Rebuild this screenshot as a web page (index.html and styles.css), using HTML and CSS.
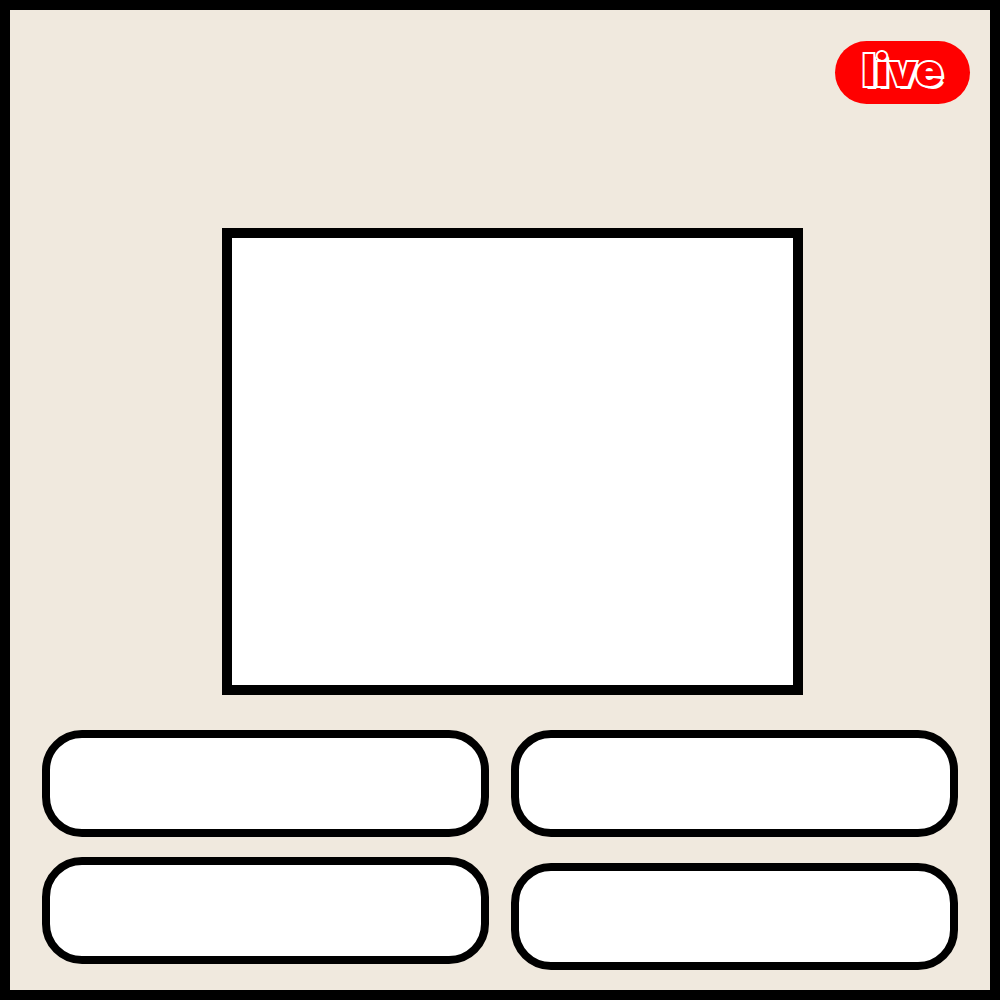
FILE: index.html
```html
<!DOCTYPE html>
<html lang="en">
<head>
<meta charset="utf-8">
<meta name="viewport" content="width=device-width, initial-scale=1">
<title>Live</title>
<link rel="stylesheet" href="styles.css">
</head>
<body>
<main class="frame">
  <header class="topbar"><span class="live">live</span></header>
  <section class="stage"><div class="screen"></div></section>
  <section class="panels">
    <div class="column">
      <div class="panel"></div>
      <div class="panel"></div>
    </div>
    <div class="column column-wide">
      <div class="panel"></div>
      <div class="panel"></div>
    </div>
  </section>
</main>
</body>
</html>
```
FILE: styles.css
```css
* {
  box-sizing: border-box;
}

body {
  margin: 0;
}

.frame {
  min-height: 100vh;
  border: 10px solid #000;
  background: #f0e9de;
  font-family: Inter, "Liberation Sans", sans-serif;
}

.topbar {
  display: flex;
  justify-content: flex-end;
  padding: 31px 20px 0;
}

.live {
  width: 135px;
  height: 63px;
  border-radius: 32px;
  background: #f00;
  color: #f00;
  font-size: 44px;
  font-weight: 900;
  line-height: 58px;
  text-align: center;
  -webkit-text-stroke: 4px #fff;
  paint-order: stroke fill;
  text-shadow: 2px 2px 0 #fff, 3px 3px 0 #fff;
}

.stage {
  display: grid;
  grid-template-columns: 212fr 581fr 187fr;
  padding-top: 124px;
}

.screen {
  grid-column: 2;
  aspect-ratio: 581 / 467;
  border: 10px solid #000;
  background: #fff;
}

.panels {
  display: grid;
  grid-template-columns: 1fr 1fr;
  gap: 22px;
  padding: 35px 32px 20px;
}

.column {
  display: flex;
  flex-direction: column;
  gap: 20px;
}

.column-wide {
  gap: 26px;
}

.panel {
  height: 107px;
  border: 8px solid #000;
  border-radius: 40px;
  background: #fff;
}
```
